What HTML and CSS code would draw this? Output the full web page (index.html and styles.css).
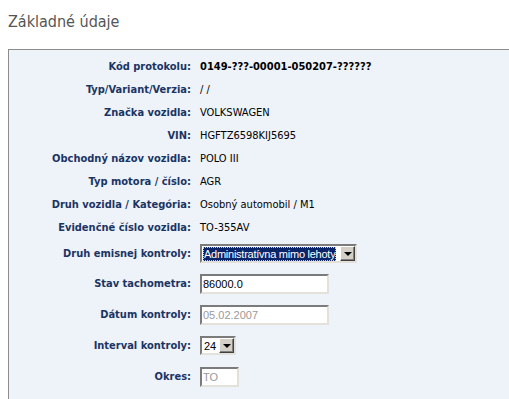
FILE: index.html
```html
<!DOCTYPE html>
<html lang="sk">
<head>
<meta charset="utf-8">
<title>Základné údaje</title>
<link rel="stylesheet" href="styles.css">
</head>
<body>
<div class="page">
  <h1 class="title">Základné údaje</h1>
  <div class="panel">
    <div class="form">
      <div class="lbl">Kód protokolu:</div>
      <div class="val strong">0149-???-00001-050207-??????</div>

      <div class="lbl">Typ/Variant/Verzia:</div>
      <div class="val">/ /</div>

      <div class="lbl">Značka vozidla:</div>
      <div class="val">VOLKSWAGEN</div>

      <div class="lbl">VIN:</div>
      <div class="val">HGFTZ6598KIJ5695</div>

      <div class="lbl">Obchodný názov vozidla:</div>
      <div class="val">POLO III</div>

      <div class="lbl">Typ motora / číslo:</div>
      <div class="val">AGR</div>

      <div class="lbl">Druh vozidla / Kategória:</div>
      <div class="val">Osobný automobil / M1</div>

      <div class="lbl">Evidenčné číslo vozidla:</div>
      <div class="val">TO-355AV</div>

      <div class="lbl">Druh emisnej kontroly:</div>
      <div class="val">
        <div class="combo combo-wide" role="combobox" aria-expanded="false">
          <span class="combo-text"><span class="sel">Administratívna mimo lehoty</span></span>
          <span class="combo-btn"><span class="tri"></span></span>
        </div>
      </div>

      <div class="lbl">Stav tachometra:</div>
      <div class="val"><input class="field field-wide" type="text" value="86000.0"></div>

      <div class="lbl">Dátum kontroly:</div>
      <div class="val"><input class="field field-wide" type="text" value="05.02.2007" disabled></div>

      <div class="lbl">Interval kontroly:</div>
      <div class="val">
        <div class="combo combo-small" role="combobox" aria-expanded="false">
          <span class="combo-text">24</span>
          <span class="combo-btn"><span class="tri"></span></span>
        </div>
      </div>

      <div class="lbl">Okres:</div>
      <div class="val"><input class="field field-small" type="text" value="TO" disabled></div>
    </div>
  </div>
</div>
</body>
</html>
```

FILE: styles.css
```css
html, body {
  margin: 0;
  padding: 0;
  background: #ffffff;
  overflow: hidden;
}

.page {
  padding: 12px 0 0 8px;
  font-family: "DejaVu Sans Condensed", "DejaVu Sans", sans-serif;
}

.title {
  margin: 0 0 18px 0;
  font-size: 16px;
  line-height: 19px;
  font-weight: normal;
  color: #555555;
}

.panel {
  box-sizing: border-box;
  width: 501px;
  height: 350px;
  background: #eef2f9;
  border-top: 1px solid #8c8c8c;
  border-left: 1px solid #8c8c8c;
  padding-top: 5px;
}

.form {
  display: grid;
  grid-template-columns: 182px 1fr;
  grid-template-rows: repeat(8, 23px) 29px repeat(4, 31px);
  column-gap: 9px;
  align-items: center;
}

.lbl {
  text-align: right;
  font-weight: bold;
  font-size: 11px;
  color: #1a3563;
  white-space: nowrap;
}

.val {
  font-size: 11px;
  color: #000000;
  white-space: nowrap;
  display: flex;
  align-items: center;
}

.val.strong {
  font-weight: bold;
}

.field {
  box-sizing: border-box;
  height: 20px;
  margin: 0;
  padding: 0 1px;
  font-family: "Liberation Sans", Arial, sans-serif;
  font-size: 11px;
  color: #000000;
  background: #ffffff;
  border-style: solid;
  border-width: 2px;
  border-color: #7b7b7b #e4e1da #e4e1da #7b7b7b;
  outline: none;
}

.field:disabled {
  color: #9a9a9a;
  background: #ffffff;
}

.field-wide { width: 129px; }
.field-small { width: 39px; }

.combo {
  box-sizing: border-box;
  height: 19px;
  display: flex;
  align-items: stretch;
  background: #ffffff;
  border-style: solid;
  border-width: 2px;
  border-color: #7b7b7b #e4e1da #e4e1da #7b7b7b;
  font-family: "Liberation Sans", Arial, sans-serif;
  font-size: 11px;
}

.combo-wide { width: 157px; }
.combo-small { width: 36px; }

.combo-text {
  flex: 1;
  min-width: 0;
  display: flex;
  align-items: center;
  padding-left: 1px;
  white-space: nowrap;
}

.combo-small .combo-text { padding-left: 2px; }

.sel {
  background: #0a246a;
  color: #ffffff;
  outline: 1px dotted #c9c9c9;
  outline-offset: -1px;
  padding: 0 1px;
  line-height: 14px;
  letter-spacing: -0.25px;
}

.combo-btn {
  box-sizing: border-box;
  flex: 0 0 15px;
  width: 15px;
  background: #d4d0c8;
  border-style: solid;
  border-width: 1px;
  border-color: #ffffff #404040 #404040 #ffffff;
  box-shadow: inset -1px -1px 0 #808080;
  display: flex;
  align-items: center;
  justify-content: center;
}

.tri {
  width: 0;
  height: 0;
  border-left: 4px solid transparent;
  border-right: 4px solid transparent;
  border-top: 4px solid #000000;
}
```
